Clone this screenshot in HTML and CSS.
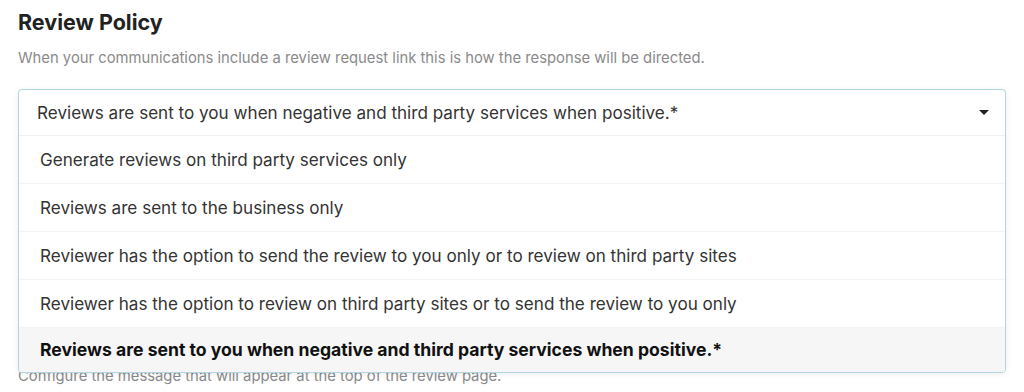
FILE: index.html
```html
<!DOCTYPE html>
<html lang="en">

<head>
	<meta charset="UTF-8">
	<title>Review Policy</title>
	<link rel="stylesheet" href="styles.css">
</head>

<body>

	<div class="section">

		<h2 class="title">Review Policy</h2>
		<p class="hint">When your communications include a review request link this is how the response will be directed.</p>

		<div class="select-wrap">
			<div class="select-box">
				<div class="select-current">
					<span>Reviews are sent to you when negative and third party services when positive.*</span>
					<span class="caret"></span>
				</div>
				<ul class="select-list">
					<li>Generate reviews on third party services only</li>
					<li>Reviews are sent to the business only</li>
					<li>Reviewer has the option to send the review to you only or to review on third party sites</li>
					<li>Reviewer has the option to review on third party sites or to send the review to you only</li>
					<li class="selected">Reviews are sent to you when negative and third party services when positive.*</li>
				</ul>
			</div>
		</div> <!-- end select-wrap -->

		<p class="hint hint-below">Configure the message that will appear at the top of the review page.</p>

	</div> <!-- end section -->

</body>

</html>
```

FILE: styles.css
```css
body {
	background: #fff;
	font-family: Inter, 'Noto Sans', sans-serif;
	margin: 0;
}

ul {
	list-style: none;
	margin: 0;
	padding: 0;
}

.section {
	padding: 10px 18px 0;
}

.title {
	color: #222;
	font-size: 21.5px;
	font-weight: 700;
	line-height: 24px;
	margin: 0;
}

.hint {
	color: #8a8a8a;
	font-size: 14.8px;
	line-height: 20px;
	margin: 14px 0 0;
}

.select-wrap {
	height: 46px;
	margin-top: 21px;
	position: relative;
}

.select-box {
	background: #fff;
	border: 1px solid #b3d4e2;
	border-radius: 4px;
	box-shadow: 0 1px 6px rgba(0, 0, 0, .08);
	left: 0;
	overflow: hidden;
	position: absolute;
	right: 0;
	top: 0;
	z-index: 2;
}

.select-current {
	align-items: center;
	border-bottom: 1px solid #f2f2f2;
	color: #333;
	display: flex;
	font-size: 17.1px;
	height: 45px;
	justify-content: space-between;
	padding: 0 16px 0 18px;
}

.caret {
	border-left: 5px solid transparent;
	border-right: 5px solid transparent;
	border-top: 5px solid #222;
	height: 0;
	width: 0;
}

.select-list li {
	border-bottom: 1px solid #f4f4f4;
	color: #333;
	font-size: 17.1px;
	height: 47px;
	line-height: 47px;
	padding: 0 21px;
}

.select-list li:last-child {
	border-bottom: 0;
	height: 44px;
	line-height: 44px;
}

.select-list .selected {
	background: #f6f6f6;
	color: #111;
	font-size: 17.6px;
	font-weight: 700;
}

.hint-below {
	margin-top: 231px;
}
```
